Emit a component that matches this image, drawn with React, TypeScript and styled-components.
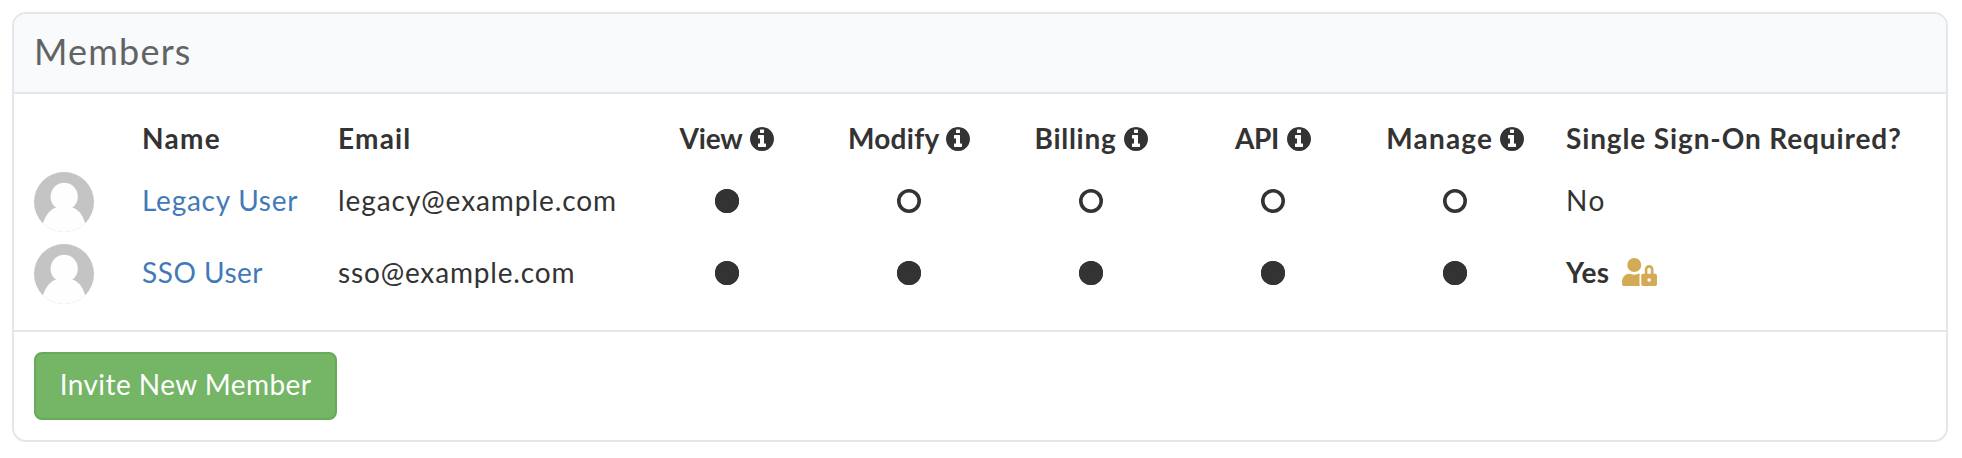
import React from "react";
import styled, { createGlobalStyle } from "styled-components";
import { FaUserLock } from "react-icons/fa";

const GlobalStyle = createGlobalStyle`
  * { box-sizing: border-box; }
  body {
    margin: 0;
    background: #fff;
    color: #333;
    font: 400 28px/36px Lato, "Liberation Sans", sans-serif;
    font-kerning: normal;
  }
`;

const Panel = styled.section`
  margin: 12px 14px 16px 12px;
  height: 430px;
  border: 2px solid #e3e7ec;
  border-radius: 14px;
  overflow: hidden;
  display: flex;
  flex-direction: column;
`;

const PanelHeader = styled.header`
  height: 80px;
  padding: 0 20px 4px;
  display: flex;
  align-items: center;
  background: #f9fafc;
  border-bottom: 2px solid #e5e8eb;
`;

const Title = styled.h2`
  margin: 0;
  font-size: 36px;
  line-height: 44px;
  font-weight: 400;
  letter-spacing: 1.2px;
  color: #626464;
`;

const MemberTable = styled.div`
  flex: none;
  padding: 20px 20px;
  border-bottom: 2px solid #e5e8eb;
`;

const Row = styled.div<{ $head?: boolean }>`
  display: grid;
  grid-template-columns: 108px 196px 298px repeat(5, 182px) 1fr;
  height: ${(p) => (p.$head ? 52 : 72)}px;
  font-weight: ${(p) => (p.$head ? 700 : 400)};
`;

const Cell = styled.div<{ $center?: boolean; $indent?: boolean }>`
  display: flex;
  align-items: center;
  justify-content: ${(p) => (p.$center ? "center" : "flex-start")};
  padding: 0 0 4px ${(p) => (p.$indent ? 20 : 0)}px;
  white-space: nowrap;
`;

const AvatarCell = styled.div`
  display: flex;
  align-items: center;
`;

const MarkCell = styled.div`
  display: flex;
  align-items: center;
  justify-content: center;
  padding-bottom: 2px;
`;

const Label = styled.span<{ $track: number; $bold?: boolean }>`
  letter-spacing: ${(p) => p.$track}px;
  ${(p) => p.$bold && "font-weight: 700;"}
`;

const MemberLink = styled.a<{ $track: number }>`
  color: #427ab8;
  text-decoration: none;
  letter-spacing: ${(p) => p.$track}px;
`;

const Mark = styled.span<{ $on: boolean }>`
  width: 24px;
  height: 24px;
  border-radius: 50%;
  box-shadow: inset 0 0 0 3.6px #333;
  background: ${(p) => (p.$on ? "#333" : "transparent")};
`;

const InfoSvg = styled.svg<{ $gap: number }>`
  width: 24px;
  height: 24px;
  margin: 2px 0 0 ${(p) => p.$gap}px;
  fill: #333;
`;

const LockIcon = styled(FaUserLock)`
  width: 35px;
  height: 28px;
  margin-left: 13px;
  color: #d4ab55;
`;

const PanelFooter = styled.footer`
  padding: 20px;
`;

const InviteButton = styled.button`
  display: block;
  width: 303px;
  height: 68px;
  padding: 0 0 4px;
  border: 2px solid #65ab58;
  border-radius: 8px;
  background: #74b566;
  color: #fff;
  font: inherit;
  letter-spacing: 0.44px;
`;

function InfoIcon({ gap }: { gap: number }) {
  return (
    <InfoSvg $gap={gap} viewBox="128 128 1536 1536">
      <path d="M1152 1376v-160q0-14-9-23t-23-9h-96v-512q0-14-9-23t-23-9h-320q-14 0-23 9t-9 23v160q0 14 9 23t23 9h96v320h-96q-14 0-23 9t-9 23v160q0 14 9 23t23 9h448q14 0 23-9t9-23zm-128-896v-160q0-14-9-23t-23-9h-192q-14 0-23 9t-9 23v160q0 14 9 23t23 9h192q14 0 23-9t9-23zm640 416q0 209-103 385.5t-279.5 279.5-385.5 103-385.5-103-279.5-279.5-103-385.5 103-385.5 279.5-279.5 385.5-103 385.5 103 279.5 279.5 103 385.5z" />
    </InfoSvg>
  );
}

function Avatar({ id }: { id: string }) {
  return (
    <svg width="60" height="60" viewBox="0 0 60 60">
      <clipPath id={id}>
        <circle cx="30" cy="30" r="30" />
      </clipPath>
      <g clipPath={`url(#${id})`}>
        <rect width="60" height="60" fill="#c4c4c4" />
        <path
          d="M8.5 53C11 44 15 39 20.5 36L40 36C45.500 39 49.500 44 51.500 53L51.500 60L8.500 60Z"
          fill="#fefefe"
        />
        <ellipse cx="30.2" cy="24.7" rx="13.6" ry="14" fill="#fefefe" />
      </g>
    </svg>
  );
}

const permissions = [
  { name: "View", track: -0.2, gap: 8 },
  { name: "Modify", track: 0.3, gap: 6.5 },
  { name: "Billing", track: 0.73, gap: 7 },
  { name: "API", track: -0.4, gap: 8 },
  { name: "Manage", track: 1.2, gap: 6.5 },
];

const members = [
  {
    name: "Legacy User",
    nameTrack: 0.75,
    email: "legacy@example.com",
    emailTrack: 0.93,
    granted: [true, false, false, false, false],
    sso: false,
  },
  {
    name: "SSO User",
    nameTrack: 0.5,
    email: "sso@example.com",
    emailTrack: 0.84,
    granted: [true, true, true, true, true],
    sso: true,
  },
];

export default function App() {
  return (
    <>
      <GlobalStyle />
      <Panel>
        <PanelHeader>
          <Title>Members</Title>
        </PanelHeader>
        <MemberTable>
          <Row $head>
            <Cell />
            <Cell>
              <Label $track={1.3}>Name</Label>
            </Cell>
            <Cell>
              <Label $track={1.2}>Email</Label>
            </Cell>
            {permissions.map((p) => (
              <Cell $center key={p.name}>
                <Label $track={p.track}>{p.name}</Label>
                <InfoIcon gap={p.gap} />
              </Cell>
            ))}
            <Cell $indent>
              <Label $track={0.88}>Single Sign-On Required?</Label>
            </Cell>
          </Row>
          {members.map((m, i) => (
            <Row key={m.email}>
              <AvatarCell>
                <Avatar id={`avatar-${i}`} />
              </AvatarCell>
              <Cell>
                <MemberLink $track={m.nameTrack}>{m.name}</MemberLink>
              </Cell>
              <Cell>
                <Label $track={m.emailTrack}>{m.email}</Label>
              </Cell>
              {m.granted.map((on, j) => (
                <MarkCell key={permissions[j].name}>
                  <Mark $on={on} />
                </MarkCell>
              ))}
              <Cell $indent>
                {m.sso ? (
                  <>
                    <Label $track={0.4} $bold>
                      Yes
                    </Label>
                    <LockIcon />
                  </>
                ) : (
                  <Label $track={1.6}>No</Label>
                )}
              </Cell>
            </Row>
          ))}
        </MemberTable>
        <PanelFooter>
          <InviteButton>Invite New Member</InviteButton>
        </PanelFooter>
      </Panel>
    </>
  );
}
